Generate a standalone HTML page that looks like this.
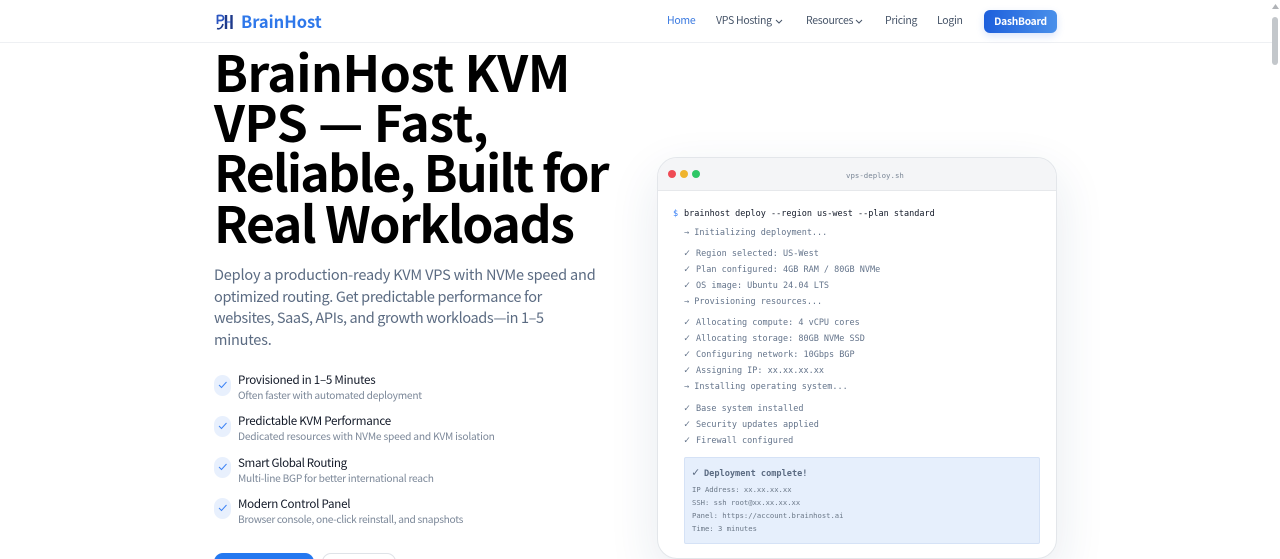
<!DOCTYPE html>
<html><head><meta charset="utf-8"><style>
html,body{margin:0;padding:0;width:1280px;height:559px;overflow:hidden;background:#fff}
body{font-family:"Noto Sans CJK SC","Liberation Sans",sans-serif;position:relative}
.a{position:absolute;white-space:nowrap}
.nav{font-size:10.5px;color:#475569;top:14px;line-height:14px;letter-spacing:-.3px}
h1{margin:0;position:absolute;left:214px;top:45.5px;font-size:50px;line-height:50.4px;font-weight:700;color:#000;letter-spacing:-.55px;white-space:nowrap}
.sub{left:214px;font-size:14.5px;line-height:22px;color:#5b6b82}
.t{left:238px;font-size:11.6px;line-height:14px;color:#111827;letter-spacing:-.26px}
.d{left:238px;font-size:10.2px;line-height:14px;color:#7c8899;letter-spacing:-.25px}
.ic{position:absolute;left:214px;width:17px;height:21px;border-radius:9px;background:#e8f0fd}
.m{font-family:"DejaVu Sans Mono",monospace;font-size:8.5px;line-height:12px;color:#64748b;left:684px}
.m i{display:inline-block;width:12px;font-style:normal;font-size:10px;line-height:10px}
</style></head><body>
<div class="a" style="left:0;top:0;width:1280px;height:43px;border-bottom:1px solid #eef0f3;box-sizing:border-box"></div>
<svg class="a" style="left:216px;top:14px" width="17" height="16" viewBox="0 0 17 16"><path d="M1.5 1v9M1.5 1.5h3.5a2.3 2.3 0 0 1 0 5H1.5" fill="none" stroke="#2b55c0" stroke-width="1.8"/><path d="M1 14.5c3 1 5-1 6-4.5" fill="none" stroke="#1e3a8a" stroke-width="1.6"/><path d="M10 1v14M15.5 1v14" stroke="#1e3a8a" stroke-width="2.4"/><path d="M10 8h5" stroke="#2b55c0" stroke-width="1"/></svg>
<div class="a" style="left:241px;top:10px;font-size:16.5px;line-height:22px;font-weight:700;color:#2f78ea">BrainHost</div>
<div class="a nav" style="left:667px;color:#3b7ae0">Home</div>
<div class="a nav" style="left:716px">VPS Hosting</div>
<svg class="a" style="left:775px;top:19px" width="8" height="5"><path d="M1 1l3 3 3-3" fill="none" stroke="#475569"/></svg>
<div class="a nav" style="left:806px">Resources</div>
<svg class="a" style="left:855px;top:19px" width="8" height="5"><path d="M1 1l3 3 3-3" fill="none" stroke="#475569"/></svg>
<div class="a nav" style="left:885px">Pricing</div>
<div class="a nav" style="left:937px">Login</div>
<div class="a" style="left:984px;top:10px;width:73px;height:23px;border-radius:6px;background:linear-gradient(90deg,#1d5fdc,#4a90ea);box-shadow:0 3px 8px rgba(37,99,235,.18);color:#fff;font-size:10.2px;font-weight:700;line-height:22px;text-align:center;letter-spacing:-.25px">DashBoard</div>
<div class="a" style="left:1272px;top:0;width:8px;height:559px;background:#fff"></div>
<div class="a" style="left:1272px;top:17px;width:6px;height:48px;border-radius:3px;background:#c3c7cb"></div>
<svg class="a" style="left:1272px;top:4px" width="7" height="5"><path d="M3.5 0L7 5H0z" fill="#b0b3b7"/></svg>

<h1>BrainHost KVM<br>VPS — Fast,<br><span style="letter-spacing:-1.8px">Reliable, Built for</span><br><span style="letter-spacing:-1.5px">Real Workloads</span></h1>
<div class="a sub" style="top:264px;letter-spacing:-.17px">Deploy a production-ready KVM VPS with NVMe speed and</div>
<div class="a sub" style="top:286px;letter-spacing:-.33px">optimized routing. Get predictable performance for</div>
<div class="a sub" style="top:307px;letter-spacing:-.38px">websites, SaaS, APIs, and growth workloads—in 1–5</div>
<div class="a sub" style="top:329px;letter-spacing:-.2px">minutes.</div>

<div class="ic" style="top:375px"></div><svg class="a" style="left:218px;top:380px" width="10" height="9"><path d="M1 5l2.5 2.5L8.5 2" fill="none" stroke="#3b82f6" stroke-width="1"/></svg>
<div class="a t" style="top:373px">Provisioned in 1–5 Minutes</div><div class="a d" style="top:388px">Often faster with automated deployment</div>
<div class="ic" style="top:416px"></div><svg class="a" style="left:218px;top:421px" width="10" height="9"><path d="M1 5l2.5 2.5L8.5 2" fill="none" stroke="#3b82f6" stroke-width="1"/></svg>
<div class="a t" style="top:414px">Predictable KVM Performance</div><div class="a d" style="top:429px;letter-spacing:-.19px">Dedicated resources with NVMe speed and KVM isolation</div>
<div class="ic" style="top:457px"></div><svg class="a" style="left:218px;top:462px" width="10" height="9"><path d="M1 5l2.5 2.5L8.5 2" fill="none" stroke="#3b82f6" stroke-width="1"/></svg>
<div class="a t" style="top:456px;letter-spacing:-.35px">Smart Global Routing</div><div class="a d" style="top:471px">Multi-line BGP for better international reach</div>
<div class="ic" style="top:498px"></div><svg class="a" style="left:218px;top:503px" width="10" height="9"><path d="M1 5l2.5 2.5L8.5 2" fill="none" stroke="#3b82f6" stroke-width="1"/></svg>
<div class="a t" style="top:497px">Modern Control Panel</div><div class="a d" style="top:512px;letter-spacing:-.32px">Browser console, one-click reinstall, and snapshots</div>

<div class="a" style="left:214px;top:553px;width:100px;height:30px;border-radius:9px;background:#2478f0"></div>
<div class="a" style="left:322px;top:553px;width:72px;height:30px;border-radius:9px;background:#fff;border:1px solid #dfe3e8"></div>

<div class="a" style="left:657px;top:157px;width:400px;height:402px;box-sizing:border-box;border-radius:20px;border:1px solid #e3e6ea;background:#fff;box-shadow:0 18px 50px rgba(30,60,110,.11);overflow:hidden">
<div style="height:32px;background:#f4f5f7;border-bottom:1px solid #e6e8eb"></div>
</div>
<div class="a" style="left:668px;top:170px;width:8px;height:8px;border-radius:50%;background:#ef4b55"></div>
<div class="a" style="left:680px;top:170px;width:8px;height:8px;border-radius:50%;background:#efb42e"></div>
<div class="a" style="left:692px;top:170px;width:8px;height:8px;border-radius:50%;background:#2ec766"></div>
<div class="a m" style="left:846px;top:170px;font-size:7.4px;color:#7a8696">vps-deploy.sh</div>

<div class="a m" style="left:673px;top:208px;color:#3b82f6">$</div>
<div class="a m" style="top:208px;color:#111827">brainhost deploy --region us-west --plan standard</div>
<div class="a m" style="top:227px">→ Initializing deployment...</div>
<div class="a m" style="top:248px"><i>✓</i>Region selected: US-West</div>
<div class="a m" style="top:264px"><i>✓</i>Plan configured: 4GB RAM / 80GB NVMe</div>
<div class="a m" style="top:280px"><i>✓</i>OS image: Ubuntu 24.04 LTS</div>
<div class="a m" style="top:296px">→ Provisioning resources...</div>
<div class="a m" style="top:317px"><i>✓</i>Allocating compute: 4 vCPU cores</div>
<div class="a m" style="top:333px"><i>✓</i>Allocating storage: 80GB NVMe SSD</div>
<div class="a m" style="top:349px"><i>✓</i>Configuring network: 10Gbps BGP</div>
<div class="a m" style="top:365px"><i>✓</i>Assigning IP: xx.xx.xx.xx</div>
<div class="a m" style="top:381px">→ Installing operating system...</div>
<div class="a m" style="top:403px"><i>✓</i>Base system installed</div>
<div class="a m" style="top:419px"><i>✓</i>Security updates applied</div>
<div class="a m" style="top:435px"><i>✓</i>Firewall configured</div>

<div class="a" style="left:684px;top:457px;width:356px;height:87px;box-sizing:border-box;background:#e6effc;border:1px solid #d5e2f6;border-radius:2px"></div>
<div class="a m" style="left:692px;top:467px;font-size:8.6px;font-weight:700;color:#5b6b82"><i style="font-size:12px">✓</i>Deployment complete!</div>
<div class="a m" style="left:692px;top:484px;font-size:7.2px;color:#6b7888">IP Address: xx.xx.xx.xx</div>
<div class="a m" style="left:692px;top:497px;font-size:7.2px;color:#6b7888">SSH: ssh root@xx.xx.xx.xx</div>
<div class="a m" style="left:692px;top:510px;font-size:7.2px;color:#6b7888">Panel: https://account.brainhost.ai</div>
<div class="a m" style="left:692px;top:523px;font-size:7.2px;color:#6b7888">Time: 3 minutes</div>
</body></html>
